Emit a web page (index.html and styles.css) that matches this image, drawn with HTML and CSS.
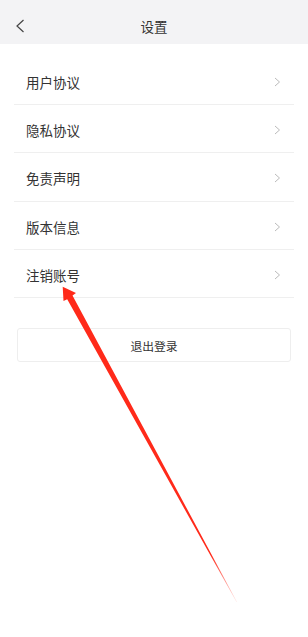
FILE: index.html
```html
<!DOCTYPE html>
<html lang="zh">
<head>
<meta charset="utf-8">
<link rel="stylesheet" href="styles.css">
</head>
<body>
<div class="page">
  <header class="topbar">
    <svg class="back" width="10" height="14" viewBox="0 0 10 14"><path d="M8.5 1 L2 7 L8.5 13" fill="none" stroke="#444" stroke-width="1.2"/></svg>
    <div class="title">设置</div>
  </header>
  <ul class="list">
    <li class="row"><span>用户协议</span><svg class="chev" width="7" height="10" viewBox="0 0 7 10"><path d="M1 1 L5.5 5 L1 9" fill="none" stroke="#bbb" stroke-width="1"/></svg></li>
    <li class="row"><span>隐私协议</span><svg class="chev" width="7" height="10" viewBox="0 0 7 10"><path d="M1 1 L5.5 5 L1 9" fill="none" stroke="#bbb" stroke-width="1"/></svg></li>
    <li class="row"><span>免责声明</span><svg class="chev" width="7" height="10" viewBox="0 0 7 10"><path d="M1 1 L5.5 5 L1 9" fill="none" stroke="#bbb" stroke-width="1"/></svg></li>
    <li class="row"><span>版本信息</span><svg class="chev" width="7" height="10" viewBox="0 0 7 10"><path d="M1 1 L5.5 5 L1 9" fill="none" stroke="#bbb" stroke-width="1"/></svg></li>
    <li class="row"><span>注销账号</span><svg class="chev" width="7" height="10" viewBox="0 0 7 10"><path d="M1 1 L5.5 5 L1 9" fill="none" stroke="#bbb" stroke-width="1"/></svg></li>
  </ul>
  <div class="logout">退出登录</div>
  <svg class="arrow" width="308" height="637" viewBox="0 0 308 637">
    <defs>
      <linearGradient id="fade" x1="63" y1="287" x2="237" y2="602" gradientUnits="userSpaceOnUse">
        <stop offset="0" stop-color="#ff2a1a"/>
        <stop offset="0.85" stop-color="#ff2a1a"/>
        <stop offset="1" stop-color="#ff2a1a" stop-opacity="0.1"/>
      </linearGradient>
    </defs>
    <polygon points="62.7,286.7 76,293 72.5,295.5 237,602 236.5,602 67.2,299.2 63.5,301" fill="url(#fade)"/>
  </svg>
</div>
</body>
</html>
```
FILE: styles.css
```css
* { box-sizing: border-box; }
html, body { margin: 0; padding: 0; background: #fff; }
body { font-family: "Noto Sans CJK SC", "Noto Sans", sans-serif; color: #333; }
.page { position: relative; width: 308px; height: 637px; overflow: hidden; background: #fff; }
.topbar {
  height: 44px;
  background: #f3f3f5;
  display: flex;
  align-items: center;
  justify-content: center;
  position: relative;
}
.back { position: absolute; left: 15px; top: 19px; }
.title { font-size: 13.5px; color: #333; padding-top: 7px; }
.list { list-style: none; margin: 0; padding: 12.5px 14px 0; }
.row {
  height: 48.4px;
  display: flex;
  align-items: center;
  justify-content: space-between;
  padding: 3px 13px 0 12px;
  border-bottom: 1px solid #efefef;
  font-size: 13.5px;
  color: #333;
}
.logout {
  margin: 30px 17px 0 17px;
  height: 34px;
  border: 1px solid #eeeeee;
  border-radius: 3px;
  display: flex;
  align-items: center;
  justify-content: center;
  font-size: 11.8px;
  color: #333;
}
.arrow { position: absolute; left: 0; top: 0; pointer-events: none; }
```
